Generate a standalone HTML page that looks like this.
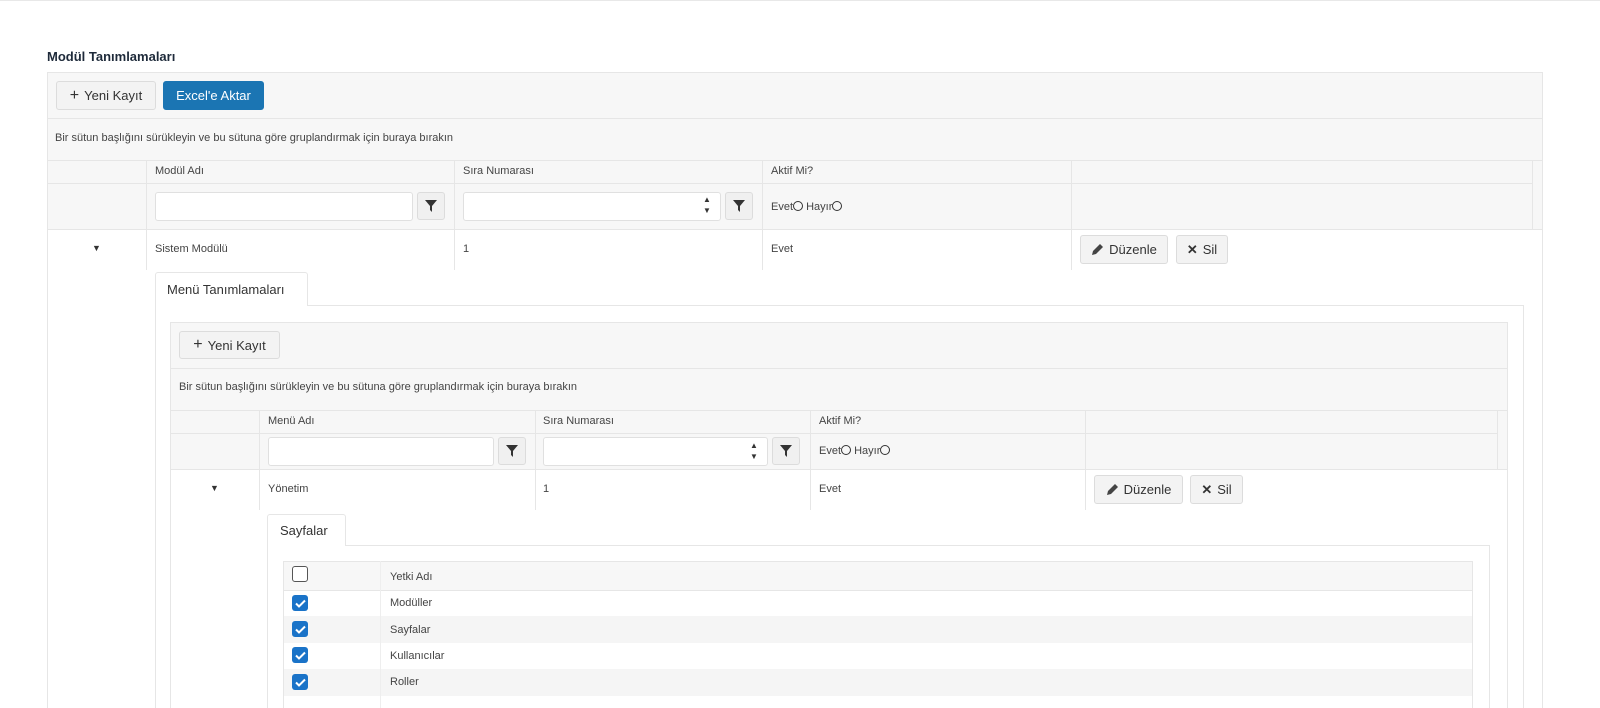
<!DOCTYPE html>
<html style="height:708px;overflow:hidden"><head><meta charset="utf-8"><style>
*{box-sizing:border-box;margin:0;padding:0}
html,body{width:1600px;height:708px;overflow:hidden}
body{background:#fff;font-family:"Liberation Sans",sans-serif;color:#444;font-size:11px;position:relative}
.a{position:absolute}
.t{position:absolute;white-space:nowrap}
.btn{position:absolute;border:1px solid #dcdcdc;background:#f3f3f3;border-radius:3px;font-size:13px;color:#333;display:flex;align-items:center;justify-content:center;gap:5px}
.inp{position:absolute;border:1px solid #e0e0e0;background:#fff;border-radius:3px}
.fb{position:absolute;border:1px solid #dcdcdc;background:#f0f0f0;border-radius:3px;width:28px;height:28px;display:flex;align-items:center;justify-content:center}
.hl{position:absolute;height:1px;background:#e6e6e6}
.vl{position:absolute;width:1px;background:#e6e6e6}
.cb{position:absolute;width:16px;height:16px;border-radius:3px;background:#1a73c8;display:flex;align-items:center;justify-content:center}
.rad{display:inline-block;width:10px;height:10px;border:1px solid #333;border-radius:50%;vertical-align:-1px}
.ob{border-bottom:none!important}
</style></head><body>
<div class="hl" style="left:0;top:0;width:1600px;background:#e8e8e8"></div>
<div class="t" style="left:47px;top:49px;font-size:13px;font-weight:bold;color:#1e2a3a">Modül Tanımlamaları</div>

<div class="a ob" style="left:47px;top:72px;width:1496px;height:636px;border:1px solid #e6e6e6"></div>
<div class="a" style="left:48px;top:73px;width:1494px;height:156px;background:#f7f7f7"></div>
<div class="hl" style="left:47px;top:118px;width:1496px"></div>
<div class="hl" style="left:47px;top:160px;width:1496px"></div>
<div class="hl" style="left:47px;top:183px;width:1486px"></div>
<div class="hl" style="left:47px;top:229px;width:1496px"></div>
<div class="vl" style="left:146px;top:160px;height:110px"></div>
<div class="vl" style="left:454px;top:160px;height:110px"></div>
<div class="vl" style="left:762px;top:160px;height:110px"></div>
<div class="vl" style="left:1071px;top:160px;height:110px"></div>
<div class="vl" style="left:1532px;top:160px;height:70px"></div>
<div class="btn" style="left:56px;top:81px;width:100px;height:29px"><b style="font-size:16px;font-weight:normal">+</b>Yeni Kayıt</div>
<div class="btn" style="left:163px;top:81px;width:101px;height:29px;background:#1b75b3;border-color:#1b75b3;color:#fff">Excel'e Aktar</div>
<div class="t" style="left:55px;top:132px">Bir sütun başlığını sürükleyin ve bu sütuna göre gruplandırmak için buraya bırakın</div>
<div class="t" style="left:155px;top:165px">Modül Adı</div>
<div class="t" style="left:463px;top:165px">Sıra Numarası</div>
<div class="t" style="left:771px;top:165px">Aktif Mi?</div>
<div class="inp" style="left:155px;top:192px;width:258px;height:29px"></div>
<div class="fb" style="left:417px;top:192px"><svg width="12" height="12" viewBox="0 0 12 12"><path d="M0 0h12L7 6v6L5 10V6z" fill="#333"/></svg></div>
<div class="inp" style="left:463px;top:192px;width:258px;height:29px"></div>
<div class="t" style="left:703px;top:194px;font-size:8px;line-height:11px;color:#333">▲<br>▼</div>
<div class="fb" style="left:725px;top:192px"><svg width="12" height="12" viewBox="0 0 12 12"><path d="M0 0h12L7 6v6L5 10V6z" fill="#333"/></svg></div>
<div class="t" style="left:771px;top:201px">Evet<span class="rad"></span> Hayır<span class="rad"></span></div>
<div class="t" style="left:92px;top:243px;font-size:9px;color:#333">▼</div>
<div class="t" style="left:155px;top:243px">Sistem Modülü</div>
<div class="t" style="left:463px;top:243px">1</div>
<div class="t" style="left:771px;top:243px">Evet</div>
<div class="btn" style="left:1080px;top:235px;width:88px;height:29px"><svg width="13" height="13" viewBox="0 0 13 13"><path d="M1 12l1-4 7-7 3 3-7 7z" fill="#444"/></svg>Düzenle</div>
<div class="btn" style="left:1176px;top:235px;width:52px;height:29px"><span style="font-size:13px;font-weight:bold">✕</span>Sil</div>

<div class="a ob" style="left:155px;top:305px;width:1369px;height:403px;border:1px solid #e6e6e6"></div>
<div class="a" style="left:155px;top:272px;width:153px;height:34px;border:1px solid #e6e6e6;border-bottom:none;border-radius:3px 3px 0 0;background:#fff"></div>
<div class="t" style="left:167px;top:282px;font-size:13px;color:#333">Menü Tanımlamaları</div>

<div class="a ob" style="left:170px;top:322px;width:1338px;height:386px;border:1px solid #e6e6e6"></div>
<div class="a" style="left:171px;top:323px;width:1336px;height:146px;background:#f7f7f7"></div>
<div class="hl" style="left:170px;top:368px;width:1338px"></div>
<div class="hl" style="left:170px;top:410px;width:1338px"></div>
<div class="hl" style="left:170px;top:433px;width:1328px"></div>
<div class="hl" style="left:170px;top:469px;width:1338px"></div>
<div class="vl" style="left:259px;top:410px;height:100px"></div>
<div class="vl" style="left:535px;top:410px;height:100px"></div>
<div class="vl" style="left:810px;top:410px;height:100px"></div>
<div class="vl" style="left:1085px;top:410px;height:100px"></div>
<div class="vl" style="left:1497px;top:410px;height:60px"></div>
<div class="btn" style="left:179px;top:331px;width:101px;height:28px"><b style="font-size:16px;font-weight:normal">+</b>Yeni Kayıt</div>
<div class="t" style="left:179px;top:381px">Bir sütun başlığını sürükleyin ve bu sütuna göre gruplandırmak için buraya bırakın</div>
<div class="t" style="left:268px;top:415px">Menü Adı</div>
<div class="t" style="left:543px;top:415px">Sıra Numarası</div>
<div class="t" style="left:819px;top:415px">Aktif Mi?</div>
<div class="inp" style="left:268px;top:437px;width:226px;height:29px"></div>
<div class="fb" style="left:498px;top:437px"><svg width="12" height="12" viewBox="0 0 12 12"><path d="M0 0h12L7 6v6L5 10V6z" fill="#333"/></svg></div>
<div class="inp" style="left:543px;top:437px;width:225px;height:29px"></div>
<div class="t" style="left:750px;top:440px;font-size:8px;line-height:11px;color:#333">▲<br>▼</div>
<div class="fb" style="left:772px;top:437px"><svg width="12" height="12" viewBox="0 0 12 12"><path d="M0 0h12L7 6v6L5 10V6z" fill="#333"/></svg></div>
<div class="t" style="left:819px;top:445px">Evet<span class="rad"></span> Hayır<span class="rad"></span></div>
<div class="t" style="left:210px;top:483px;font-size:9px;color:#333">▼</div>
<div class="t" style="left:268px;top:483px">Yönetim</div>
<div class="t" style="left:543px;top:483px">1</div>
<div class="t" style="left:819px;top:483px">Evet</div>
<div class="btn" style="left:1094px;top:475px;width:89px;height:29px"><svg width="13" height="13" viewBox="0 0 13 13"><path d="M1 12l1-4 7-7 3 3-7 7z" fill="#444"/></svg>Düzenle</div>
<div class="btn" style="left:1190px;top:475px;width:53px;height:29px"><span style="font-size:13px;font-weight:bold">✕</span>Sil</div>

<div class="a ob" style="left:267px;top:545px;width:1223px;height:163px;border:1px solid #e6e6e6"></div>
<div class="a" style="left:267px;top:514px;width:79px;height:32px;border:1px solid #e6e6e6;border-bottom:none;border-radius:3px 3px 0 0;background:#fff"></div>
<div class="t" style="left:280px;top:523px;font-size:13px;color:#333">Sayfalar</div>

<div class="a ob" style="left:283px;top:561px;width:1190px;height:147px;border:1px solid #e6e6e6"></div>
<div class="a" style="left:284px;top:562px;width:1188px;height:28px;background:#f7f7f7"></div>
<div class="a" style="left:284px;top:616px;width:1188px;height:27px;background:#f5f5f5"></div>
<div class="a" style="left:284px;top:669px;width:1188px;height:27px;background:#f5f5f5"></div>
<div class="hl" style="left:283px;top:590px;width:1190px"></div>
<div class="vl" style="left:380px;top:561px;height:147px;background:#eee"></div>
<div class="a" style="left:292px;top:566px;width:16px;height:16px;border:1px solid #555;border-radius:3px;background:#fff"></div>
<div class="t" style="left:390px;top:571px">Yetki Adı</div>
<div class="cb" style="left:292px;top:595px"><svg width="11" height="9" viewBox="0 0 11 9"><path d="M1 4.5l3 3 6-6" stroke="#fff" stroke-width="2" fill="none"/></svg></div>
<div class="cb" style="left:292px;top:621px"><svg width="11" height="9" viewBox="0 0 11 9"><path d="M1 4.5l3 3 6-6" stroke="#fff" stroke-width="2" fill="none"/></svg></div>
<div class="cb" style="left:292px;top:647px"><svg width="11" height="9" viewBox="0 0 11 9"><path d="M1 4.5l3 3 6-6" stroke="#fff" stroke-width="2" fill="none"/></svg></div>
<div class="cb" style="left:292px;top:674px"><svg width="11" height="9" viewBox="0 0 11 9"><path d="M1 4.5l3 3 6-6" stroke="#fff" stroke-width="2" fill="none"/></svg></div>
<div class="t" style="left:390px;top:597px">Modüller</div>
<div class="t" style="left:390px;top:624px">Sayfalar</div>
<div class="t" style="left:390px;top:650px">Kullanıcılar</div>
<div class="t" style="left:390px;top:676px">Roller</div>
</body></html>
